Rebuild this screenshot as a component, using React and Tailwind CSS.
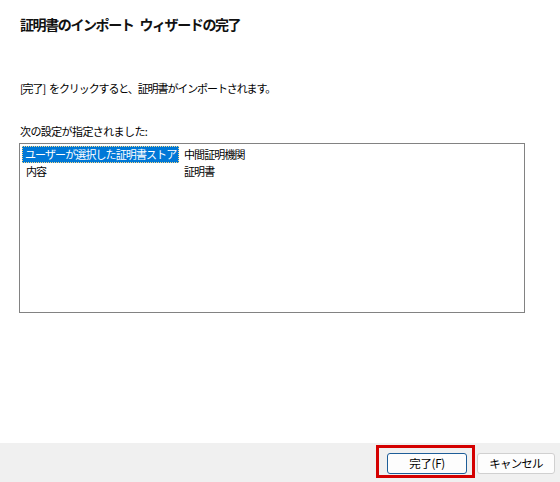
import React from "react";

const font = { fontFamily: '"Noto Sans CJK JP", "Noto Sans", sans-serif' };

function Gap({ w }) {
  return <span className={w === 6 ? "inline-block w-[6px]" : "inline-block w-[4px]"} />;
}

export default function App() {
  return (
    <div
      className="w-[560px] h-[482px] bg-white flex flex-col text-black overflow-hidden"
      style={font}
    >
      <div className="flex-1 flex flex-col pl-[19px] pr-[35px]">
        <h1 className="pt-[15px] pl-px text-[14px] leading-[18px] font-bold tracking-[-1.4px] text-[#111] whitespace-nowrap">
          証明書のインポート<Gap w={6} />ウィザードの完了
        </h1>
        <p className="mt-[47px] pl-px text-[11px] leading-[16px] tracking-[-1.1px] whitespace-nowrap">
          [完了]<Gap w={4} />をクリックすると、証明書がインポートされます。
        </p>
        <p className="mt-[27px] pl-px text-[11px] leading-[16px] tracking-[-0.6px] whitespace-nowrap">
          次の設定が指定されました:
        </p>
        <div className="mt-[4px] w-[506px] h-[170px] border border-[#828282] bg-white pt-[2px] pl-[2px] text-[11px] leading-[17px] tracking-[-0.9px]">
          <div className="flex">
            <div className="w-[162px]">
              <span className="inline-block bg-[#0078d7] text-white pl-[3px] pr-[3px] outline-1 outline-dotted outline-offset-[-1px] outline-[#f5d98a] whitespace-nowrap">
                ユーザーが選択した証明書ストア
              </span>
            </div>
            <div className="whitespace-nowrap">中間証明機関</div>
          </div>
          <div className="flex">
            <div className="w-[162px] pl-[4px]">内容</div>
            <div>証明書</div>
          </div>
        </div>
      </div>
      <div className="h-[39px] bg-[#f0f0f0] flex items-start justify-end pt-[10px] pr-[5px] gap-[10px]">
        <div className="relative">
          <div className="absolute left-[-11px] right-[-8px] top-[-8px] bottom-[-4px] border-[3px] border-[#d40000] pointer-events-none" />
          <button className="w-[80px] h-[21px] rounded-[3px] border border-[#1d5d98] bg-[#fdfdfd] text-[11.5px] leading-[19px] tracking-[-0.3px] flex items-center justify-center">
            完了(F)
          </button>
        </div>
        <button className="w-[78px] h-[21px] rounded-[3px] border border-[#d0d0d0] bg-[#fdfdfd] text-[11.5px] leading-[19px] tracking-[-0.8px] flex items-center justify-center">
          キャンセル
        </button>
      </div>
    </div>
  );
}
